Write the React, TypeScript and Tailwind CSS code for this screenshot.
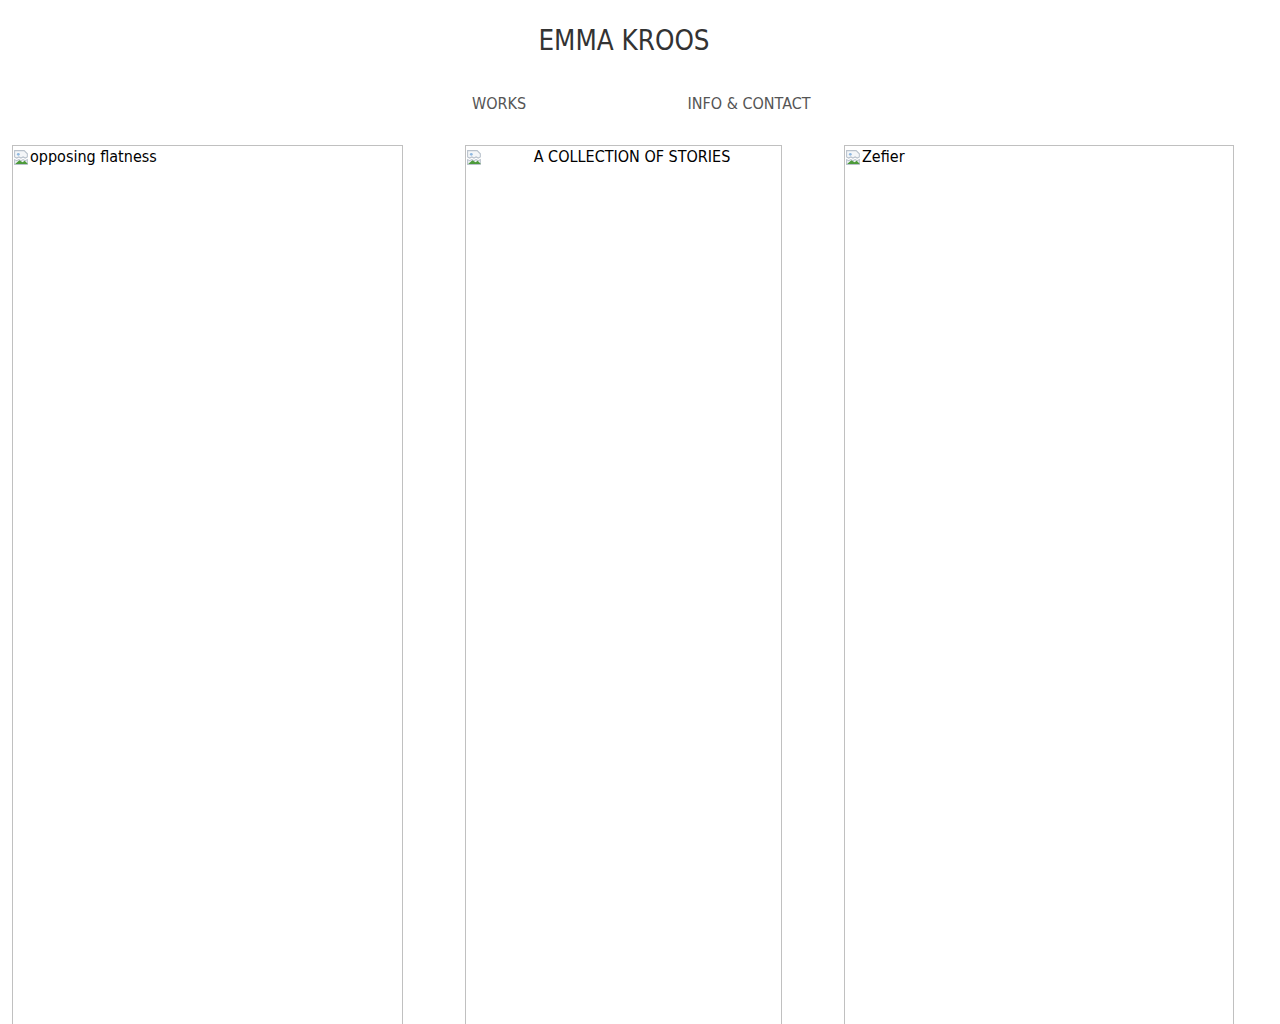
const works = [
  { title: "opposing flatness", w: "w-[391px]", center: false },
  { title: "A COLLECTION OF STORIES", w: "w-[317px]", center: true },
  { title: "Zefier", w: "w-[390px]", center: false },
];

function BrokenImage() {
  return (
    <svg width="17" height="17" viewBox="0 0 16 16" className="shrink-0 mt-[2px]">
      <path d="M1.5 1.5h9l3 3v3l-2 1-2-1-2 1-2-1-2 1-2-1z" fill="#f4f6f8" stroke="#b9c2cc" />
      <path d="M1.5 10l2 1 2-1 2 1 2-1 2 1 2-1v4.5h-12z" fill="#eef2f5" stroke="#b9c2cc" />
      <path d="M2 14l4-3.5 3 2 2-1.5 3 3z" fill="#4c9a3a" />
      <circle cx="5" cy="5" r="1.3" fill="#8fb8e0" />
    </svg>
  );
}

export default function App() {
  return (
    <div className="min-h-screen bg-white font-['Trebuchet_MS','DejaVu_Sans_Condensed','DejaVu_Sans',sans-serif]">
      <header className="pt-[22px] pr-[32px] text-center">
        <h1 className="text-[27.5px] leading-[36px] text-[#333333]">EMMA KROOS</h1>
        <nav className="mt-[36px] flex justify-center text-[16px] leading-[20px] text-[#555555]">
          <a href="#works" className="w-[250px] text-center">WORKS</a>
          <a href="#info" className="w-[250px] text-center">INFO &amp; CONTACT</a>
        </nav>
      </header>

      <main className="mt-[31px] flex gap-[62px] pl-[12px]">
        {works.map(work => (
          <div
            key={work.title}
            className={`${work.w} h-[1000px] border border-[#c0c0c0] shrink-0`}
          >
            <div className="flex items-start pt-[1px] text-[16px] leading-[20px] text-black">
              <BrokenImage />
              <span className={work.center ? "flex-1 text-center" : ""}>{work.title}</span>
            </div>
          </div>
        ))}
      </main>
    </div>
  );
}
